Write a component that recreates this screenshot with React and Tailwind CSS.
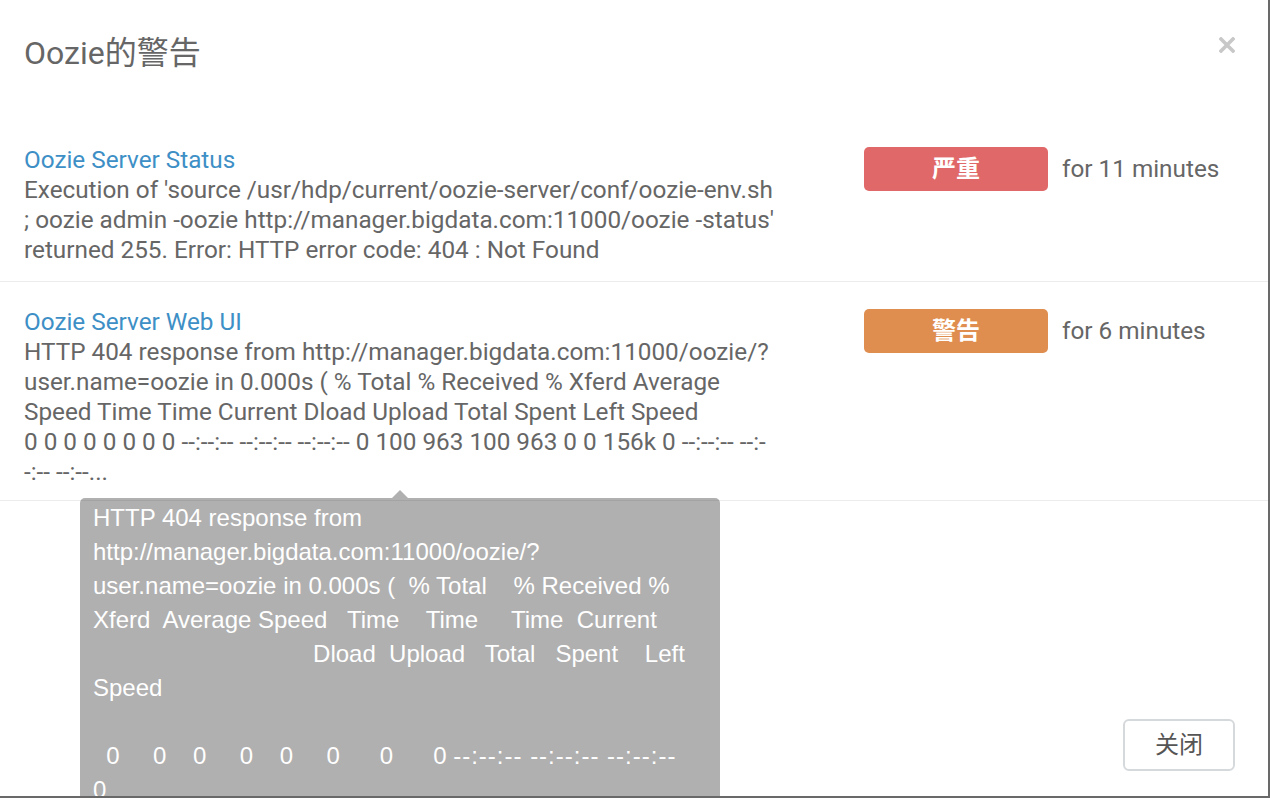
const alerts = [
    {
        title: 'Oozie Server Status',
        lines: [
            "Execution of 'source /usr/hdp/current/oozie-server/conf/oozie-env.sh",
            "; oozie admin -oozie http://manager.bigdata.com:11000/oozie -status'",
            'returned 255. Error: HTTP error code: 404 : Not Found',
        ],
        level: '严重',
        levelClass: 'bg-[#e06868]',
        since: 'for 11 minutes',
        padClass: 'pb-[16px]',
    },
    {
        title: 'Oozie Server Web UI',
        lines: [
            'HTTP 404 response from http://manager.bigdata.com:11000/oozie/?',
            'user.name=oozie in 0.000s ( % Total % Received % Xferd Average',
            'Speed Time Time Current Dload Upload Total Spent Left Speed',
            '0 0 0 0 0 0 0 0 --:--:-- --:--:-- --:--:-- 0 100 963 100 963 0 0 156k 0 --:--:-- --:-',
            '-:-- --:--...',
        ],
        level: '警告',
        levelClass: 'bg-[#df8e50]',
        since: 'for 6 minutes',
        padClass: 'pb-[13px]',
    },
];

const tooltipLines = [
    'HTTP 404 response from',
    'http://manager.bigdata.com:11000/oozie/?',
    'user.name=oozie in 0.000s (  % Total    % Received %',
    'Xferd  Average Speed   Time    Time     Time  Current',
    '                                 Dload  Upload   Total   Spent    Left',
    'Speed',
    ' ',
];

const AlertRow = ({ alert }) => (
    <div className={`flex border-b border-[#ececec] pt-[25px] ${alert.padClass}`}>
        <div className="w-[752px] ml-6 text-[24.3px] leading-[30px] text-[#666]">
            <a className="block text-[#3d8fc6] whitespace-nowrap">{alert.title}</a>
            {alert.lines.map((line, i) => (
                <div key={i} className="whitespace-nowrap">{line}</div>
            ))}
        </div>
        <div className="ml-[88px] mt-[2px] flex items-center self-start">
            <span className={`${alert.levelClass} w-[184px] h-[44px] rounded-[5px] flex items-center justify-center text-white text-[24px] font-bold`}>
                {alert.level}
            </span>
            <span className="ml-[14px] text-[24.3px] text-[#666]">{alert.since}</span>
        </div>
    </div>
);

export default function App() {
    return (
        <div className="w-full h-[798px] bg-[#696969] font-['Roboto','Noto_Sans_CJK_SC',sans-serif]">
            <div className="relative w-[1268px] h-[796px] bg-white overflow-hidden flex flex-col">
                {/* header */}
                <div className="flex items-start justify-between pl-6 pr-[33px] pt-[33px] pb-[47px]">
                    <h4 className="text-[32px] leading-[40px] text-[#666]">Oozie的警告</h4>
                    <svg width="16" height="16" viewBox="0 0 16 16" className="mt-[4px]">
                        <path d="M2 2 L14 14 M14 2 L2 14" stroke="#c8c8c8" strokeWidth="3.6" strokeLinecap="square" />
                    </svg>
                </div>

                {alerts.map((alert) => (
                    <AlertRow key={alert.title} alert={alert} />
                ))}

                <div className="mt-auto flex justify-end pr-[33px] pb-[25px]">
                    <button className="w-[112px] h-[52px] border-2 border-[#d6d9dc] rounded-[6px] text-[24px] text-[#555]">
                        关闭
                    </button>
                </div>

                {/* tooltip over the second alert */}
                <div className="absolute left-[80px] top-[490px] w-[640px]">
                    <div className="ml-[312px] w-0 h-0 border-x-8 border-x-transparent border-b-8 border-b-[rgba(0,0,0,0.31)]"></div>
                    <div className="h-[320px] rounded-[5px] bg-[rgba(0,0,0,0.31)] pt-[3px] pl-[13px] font-['Liberation_Sans',Arial,sans-serif] text-[24px] leading-[34px] text-white">
                        {tooltipLines.map((line, i) => (
                            <div key={i} className="whitespace-pre">{line}</div>
                        ))}
                        <div className="whitespace-pre">
                            {'  0     0    0     0    0     0      0      0 '}
                            <span className="tracking-[1px]">--:--:-- --:--:-- --:--:--</span>
                        </div>
                        <div className="whitespace-pre">0</div>
                    </div>
                </div>
            </div>
        </div>
    );
}
